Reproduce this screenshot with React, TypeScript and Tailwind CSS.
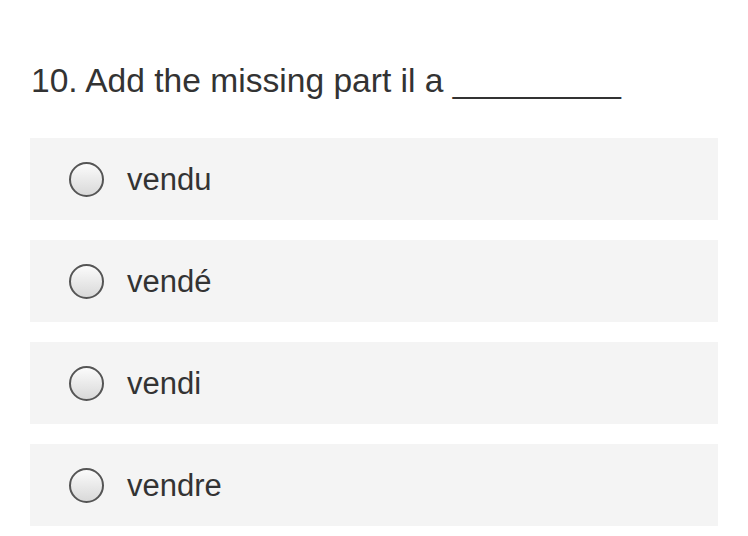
import React from 'react';

const options = ['vendu', 'vendé', 'vendi', 'vendre'];

const App: React.FC = () => {
  return (
    <div className="min-h-screen w-[748px] bg-white px-[30px] pt-[61px] font-['Liberation_Sans',Arial,sans-serif] text-[#333333]">
      <h1 className="text-[33.6px] leading-[39px] font-normal pl-[1px]">10. Add the missing part il a _________</h1>

      <div className="mt-[38px] flex flex-col gap-[20px]">
        {options.map((opt) => (
          <label key={opt} className="flex h-[82px] items-center bg-[#f4f4f4] pl-[39px]">
            <span className="h-[35px] w-[35px] shrink-0 rounded-full border-2 border-[#555555] bg-gradient-to-b from-[#fbfbfb] to-[#d9d9d9]" />
            <span className="ml-[23px] text-[31px] leading-[35px]">{opt}</span>
          </label>
        ))}
      </div>
    </div>
  );
};

export default App;
